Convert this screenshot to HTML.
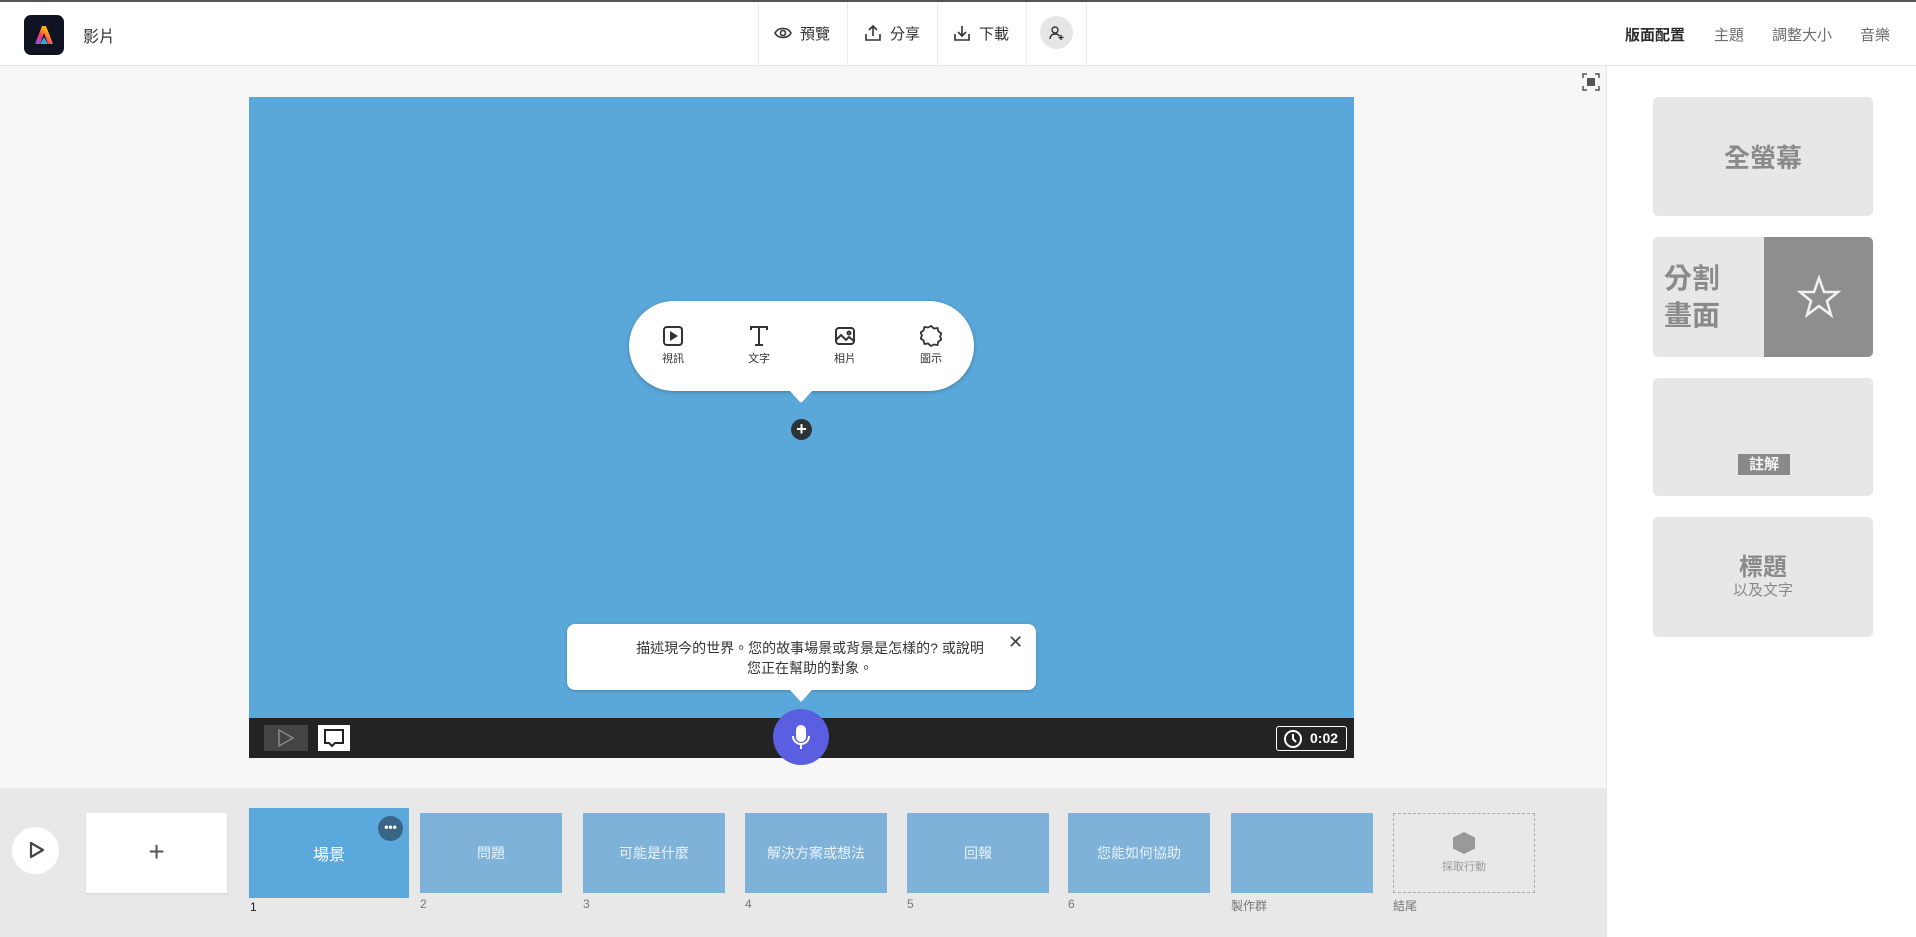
<!DOCTYPE html>
<html><head><meta charset="utf-8"><style>
*{box-sizing:border-box;margin:0;padding:0}
body{width:1916px;height:937px;position:relative;overflow:hidden;background:#f7f7f7;font-family:"Liberation Sans","Noto Sans CJK TC",sans-serif;color:#323232}
.a{position:absolute}
.top{left:0;top:0;width:1916px;height:66px;background:#fff;border-top:2px solid #555;border-bottom:1px solid #e4e4e4}
.nv{top:0;height:66px;display:flex;align-items:center;font-size:15px;gap:8px}
.dv{top:2px;width:1px;height:64px;background:#eaeaea}
.rn{top:24px;font-size:15px;color:#6e6e6e}
.card{left:1653px;width:220px;background:#e7e7e7;border-radius:5px;color:#8a8a8a;display:flex;align-items:center;justify-content:center;flex-direction:column;font-weight:bold}
.sc{top:813px;width:142px;height:80px;background:#7eb2d9;color:#e9f2fa;font-size:14px;display:flex;align-items:center;justify-content:center}
.num{top:897px;font-size:12px;color:#777}
</style></head><body>
<div class="a top"></div>
<div class="a" style="left:24px;top:15px;width:40px;height:40px;border-radius:7px;background:#0f1220"></div>
<svg class="a" style="left:24px;top:15px" width="40" height="40" viewBox="0 0 40 40"><defs><linearGradient id="g" x1="0" y1="1" x2="1" y2="0"><stop offset="0" stop-color="#7b4cff"/><stop offset=".4" stop-color="#ff3b6b"/><stop offset=".7" stop-color="#ffb400"/><stop offset="1" stop-color="#ff4d4d"/></linearGradient></defs><path d="M11 29 L18 11 H22 L29 29 H24 L20 18 L16 29Z" fill="url(#g)"/><path d="M16 29 L20 22 L24 29" fill="#3ad1ff" opacity=".8"/></svg>
<div class="a" style="left:83px;top:23px;font-size:16px">影片</div>

<div class="a dv" style="left:758px"></div><div class="a dv" style="left:847px"></div><div class="a dv" style="left:937px"></div><div class="a dv" style="left:1026px"></div><div class="a dv" style="left:1086px"></div>
<div class="a nv" style="left:774px"><svg width="18" height="18" viewBox="0 0 18 18" fill="none" stroke="#333" stroke-width="1.6"><path d="M1 9 C4 3 14 3 17 9 C14 15 4 15 1 9Z"/><circle cx="9" cy="9" r="2.5"/></svg>預覽</div>
<div class="a nv" style="left:864px"><svg width="18" height="18" viewBox="0 0 18 18" fill="none" stroke="#333" stroke-width="1.6"><path d="M9 12V2M5 6l4-4 4 4M2 10v6h14v-6"/></svg>分享</div>
<div class="a nv" style="left:953px"><svg width="18" height="18" viewBox="0 0 18 18" fill="none" stroke="#333" stroke-width="1.6"><path d="M9 2v10M5 8l4 4 4-4M2 10v6h14v-6"/></svg>下載</div>
<div class="a" style="left:1040px;top:16px;width:33px;height:33px;border-radius:50%;background:#e6e6e6"></div>
<svg class="a" style="left:1048px;top:24px" width="18" height="18" viewBox="0 0 18 18" fill="none" stroke="#333" stroke-width="1.4"><circle cx="7" cy="6" r="3"/><path d="M2 15c0-3 2-5 5-5s4 1 4.5 2M13 11v5M10.5 13.5h5"/></svg>
<div class="a rn" style="left:1625px;color:#2c2c2c;font-weight:bold">版面配置</div>
<div class="a rn" style="left:1714px">主題</div>
<div class="a rn" style="left:1772px">調整大小</div>
<div class="a rn" style="left:1860px">音樂</div>

<div class="a" style="left:1606px;top:66px;width:310px;height:871px;background:#fff;border-left:1px solid #e6e6e6"></div>
<svg class="a" style="left:1582px;top:73px" width="18" height="18" viewBox="0 0 18 18" fill="none" stroke="#555" stroke-width="1.5"><path d="M1 5V1h4M13 1h4v4M17 13v4h-4M5 17H1v-4"/><rect x="5" y="5" width="8" height="8" fill="#555" stroke="none"/></svg>

<div class="a card" style="top:97px;height:119px;font-size:26px">全螢幕</div>
<div class="a card" style="top:237px;height:120px;align-items:flex-start;justify-content:center;padding-left:11px;font-size:28px;line-height:37px">分割<br>畫面</div>
<div class="a" style="left:1764px;top:237px;width:109px;height:120px;background:#8e8e8e;border-radius:0 5px 5px 0"></div>
<svg class="a" style="left:1797px;top:275px" width="44" height="44" viewBox="0 0 44 44"><path d="M22 3 L27 17 H41 L30 26 L34 40 L22 31 L10 40 L14 26 L3 17 H17Z" fill="none" stroke="#f2f2f2" stroke-width="2.5"/></svg>
<div class="a card" style="top:378px;height:118px"></div>
<div class="a" style="left:1738px;top:454px;width:52px;height:21px;background:#8a8a8a;color:#f4f4f4;font-size:15px;font-weight:bold;text-align:center;line-height:21px">註解</div>
<div class="a card" style="top:517px;height:120px;font-size:24px;line-height:28px">標題<span style="font-size:15px;font-weight:normal;line-height:18px">以及文字</span></div>

<div class="a" style="left:249px;top:97px;width:1105px;height:621px;background:#5aa8d9"></div>
<div class="a" style="left:249px;top:718px;width:1105px;height:40px;background:#232323"></div>
<div class="a" style="left:264px;top:725px;width:44px;height:26px;background:#444"></div>
<svg class="a" style="left:277px;top:728px" width="18" height="20" viewBox="0 0 18 20"><path d="M2 2 L16 10 L2 18Z" fill="none" stroke="#888" stroke-width="1.5"/></svg>
<div class="a" style="left:318px;top:725px;width:32px;height:26px;background:#fff"></div>
<svg class="a" style="left:323px;top:728px" width="22" height="22" viewBox="0 0 22 22"><path d="M2 2h18v13h-8l-3 3-3-3H2Z" fill="none" stroke="#222" stroke-width="2"/></svg>
<div class="a" style="left:1276px;top:726px;width:71px;height:25px;border:1.5px solid #fff;border-radius:3px;color:#fff;font-size:14px;font-weight:bold;line-height:22px;padding-left:33px">0:02</div>
<svg class="a" style="left:1283px;top:729px" width="20" height="20" viewBox="0 0 20 20" fill="none" stroke="#fff" stroke-width="2"><circle cx="10" cy="10" r="8"/><path d="M10 5v5l3 3"/></svg>

<div class="a" style="left:629px;top:301px;width:345px;height:90px;background:#fff;border-radius:45px;box-shadow:0 1px 4px rgba(0,0,0,.25)"></div>
<svg class="a" style="left:788px;top:389px" width="26" height="16" viewBox="0 0 26 16"><path d="M0 0 H26 L15 12 Q13 15 11 12Z" fill="#fff"/></svg>
<div class="a" style="left:630px;top:325px;width:344px;display:flex;font-size:11px;color:#333">
<div style="width:86px;text-align:center"><svg width="22" height="22" viewBox="0 0 22 22"><rect x="2" y="2" width="18" height="18" rx="3" fill="none" stroke="#333" stroke-width="2"/><path d="M8 6l8 5-8 5z" fill="#333"/></svg><br>視訊</div>
<div style="width:86px;text-align:center"><svg width="22" height="22" viewBox="0 0 22 22"><path d="M3 5V2h16v3M11 2v18M7 20h8" fill="none" stroke="#333" stroke-width="2"/></svg><br>文字</div>
<div style="width:86px;text-align:center"><svg width="22" height="22" viewBox="0 0 22 22" fill="none" stroke="#333" stroke-width="2"><rect x="2" y="3" width="18" height="16" rx="3"/><path d="M2 15l5-5 5 5 3-3 5 4"/><circle cx="15" cy="8" r="1.5"/></svg><br>相片</div>
<div style="width:86px;text-align:center"><svg width="22" height="22" viewBox="0 0 22 22"><path d="M11 1l3 2.5 3.5-.5 1 3.5 3 2-1.5 3 1.5 3-3 2-1 3.5-3.5-.5L11 21l-3-2.5-3.5.5-1-3.5-3-2 1.5-3-1.5-3 3-2 1-3.5 3.5.5Z" fill="none" stroke="#333" stroke-width="1.8"/></svg><br>圖示</div>
</div>
<div class="a" style="left:791px;top:419px;width:21px;height:21px;border-radius:50%;background:#2e3338;color:#fff;font-size:18px;font-weight:bold;text-align:center;line-height:20px">+</div>

<div class="a" style="left:567px;top:624px;width:469px;height:66px;background:#fff;border-radius:8px;box-shadow:0 1px 3px rgba(0,0,0,.2)"></div>
<svg class="a" style="left:789px;top:689px" width="24" height="14" viewBox="0 0 24 14"><path d="M0 0 H24 L12 13Z" fill="#fff"/></svg>
<div class="a" style="left:590px;top:638px;width:440px;font-size:14px;line-height:20px;text-align:center;color:#333">描述現今的世界。您的故事場景或背景是怎樣的? 或說明<br>您正在幫助的對象。</div>
<div class="a" style="left:1008px;top:632px;font-size:18px;color:#444">✕</div>
<div class="a" style="left:773px;top:709px;width:56px;height:56px;border-radius:50%;background:#5a5ee0"></div>
<svg class="a" style="left:791px;top:725px" width="20" height="26" viewBox="0 0 20 26" fill="none" stroke="#fff" stroke-width="2"><rect x="6" y="1" width="8" height="15" rx="4" fill="#fff"/><path d="M2 11c0 5 4 8 8 8s8-3 8-8M10 19v5"/></svg>

<div class="a" style="left:0;top:788px;width:1606px;height:149px;background:#e8e8e8"></div>
<div class="a" style="left:12px;top:827px;width:47px;height:47px;border-radius:50%;background:#fff"></div>
<svg class="a" style="left:28px;top:840px" width="18" height="20" viewBox="0 0 18 20"><path d="M3 3 L15 10 L3 17Z" fill="none" stroke="#444" stroke-width="2.2" stroke-linejoin="round"/></svg>
<div class="a" style="left:86px;top:813px;width:141px;height:80px;background:#fff;box-shadow:0 1px 2px rgba(0,0,0,.1);text-align:center;font-size:28px;line-height:78px;color:#555;font-weight:300">+</div>
<div class="a sc" style="left:249px;top:808px;width:160px;height:90px;background:#5aa8dc;color:#fff;font-size:16px">場景</div>
<div class="a" style="left:378px;top:816px;width:25px;height:25px;border-radius:50%;background:#3a6586;color:#fff;font-size:12px;text-align:center;line-height:22px;font-weight:bold">•••</div>
<div class="a num" style="left:250px;top:900px;color:#222">1</div>
<div class="a sc" style="left:420px">問題</div><div class="a num" style="left:420px">2</div>
<div class="a sc" style="left:583px">可能是什麼</div><div class="a num" style="left:583px">3</div>
<div class="a sc" style="left:745px">解決方案或想法</div><div class="a num" style="left:745px">4</div>
<div class="a sc" style="left:907px">回報</div><div class="a num" style="left:907px">5</div>
<div class="a sc" style="left:1068px">您能如何協助</div><div class="a num" style="left:1068px">6</div>
<div class="a sc" style="left:1231px"></div><div class="a num" style="left:1231px">製作群</div>
<div class="a" style="left:1393px;top:813px;width:142px;height:80px;border:1px dashed #aaa;color:#999;font-size:11px;text-align:center;padding-top:18px"><div style="width:22px;height:22px;margin:0 auto 4px;background:#999;clip-path:polygon(50% 0,100% 25%,100% 75%,50% 100%,0 75%,0 25%)"></div>採取行動</div>
<div class="a num" style="left:1393px">結尾</div>
</body></html>
